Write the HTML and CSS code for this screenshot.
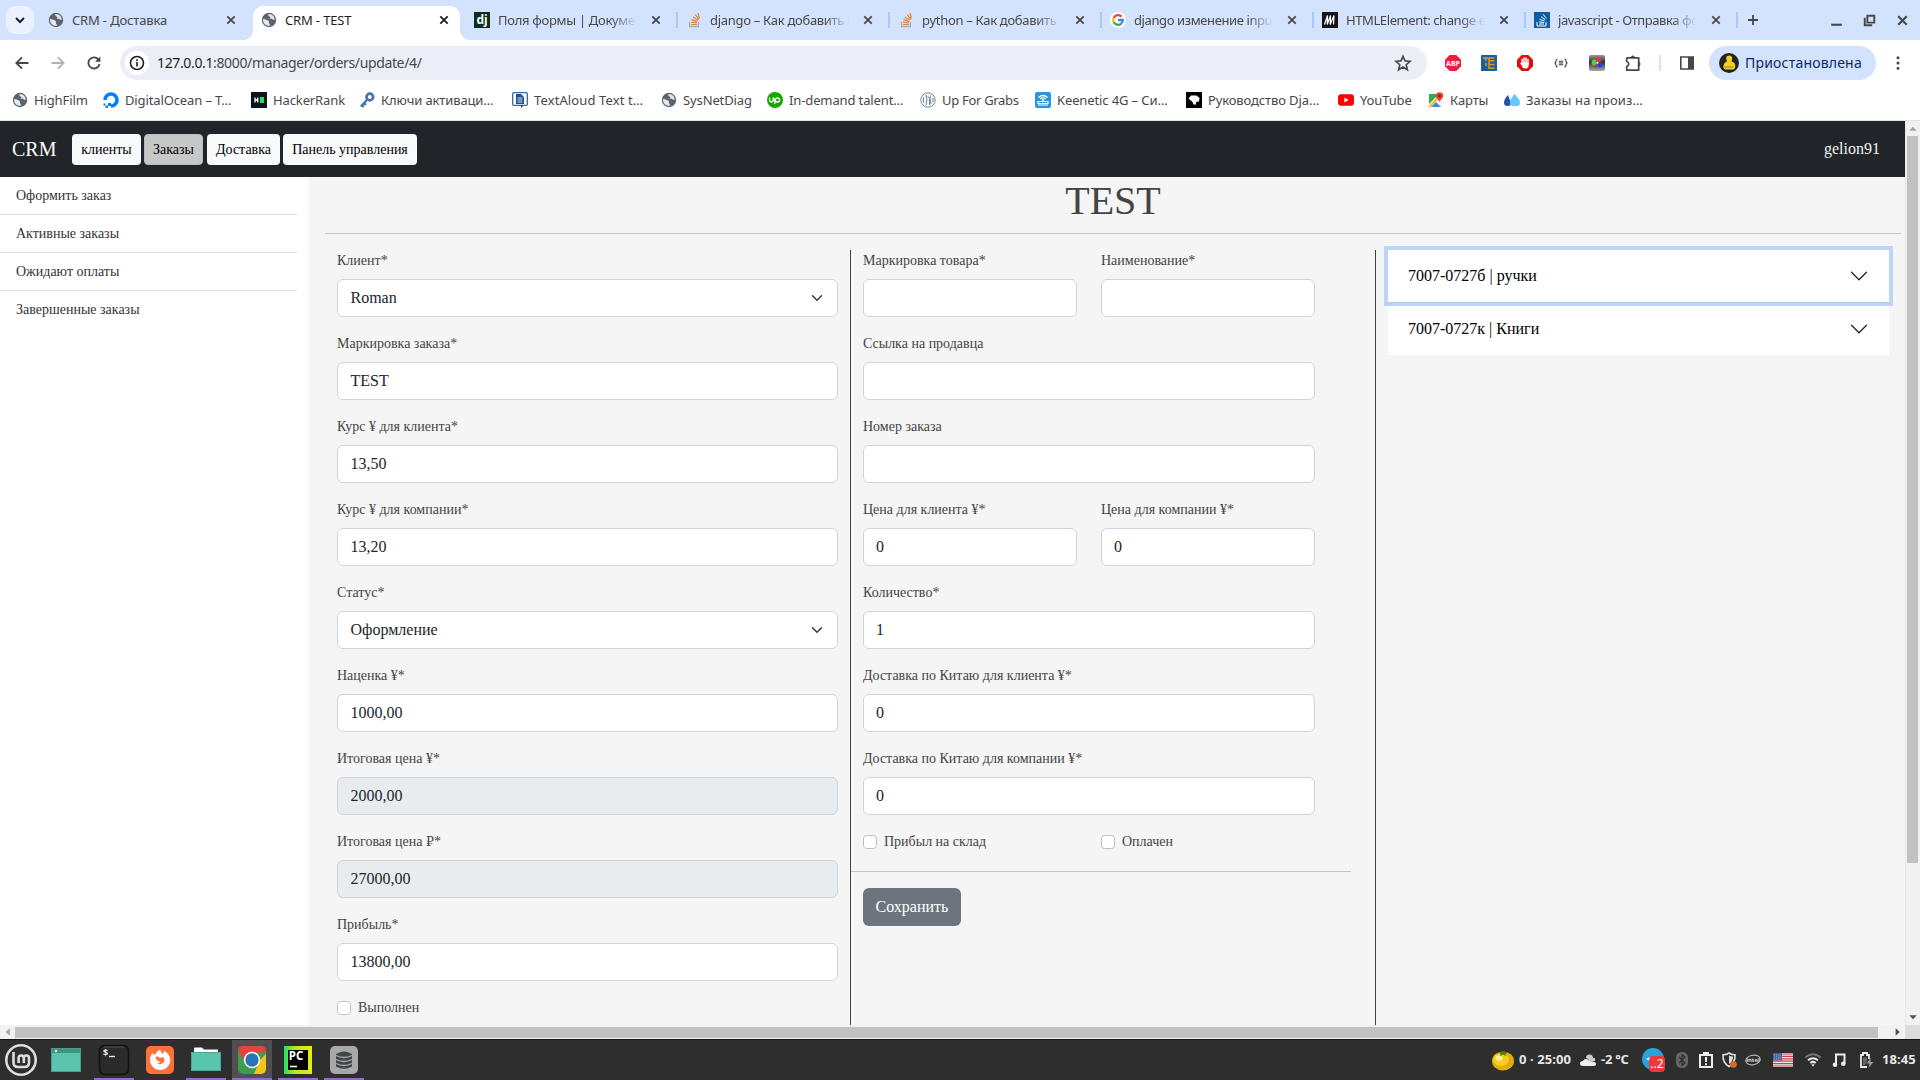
FILE: index.html
```html
<!DOCTYPE html>
<html lang="ru">
<head>
<meta charset="utf-8">
<title>CRM - TEST</title>
<link rel="stylesheet" href="styles.css">
</head>
<body>
<svg class="defs" width="0" height="0">
  <symbol id="globe" viewBox="0 0 16 16"><circle cx="8" cy="8" r="7.2" fill="#5f6368"/><path d="M2 7c2 .2 3.500 1 5 1.400C8.300 8.800 7.800 10 8 11c.2 1.200 1.200 1 1.300 2.600l-1.500.2C4.500 13.700 2 11 2 8zM6.500 2.200C8 3 6.800 3.900 8.500 4.400c1.500.4 1 1.500 0 2 1.300.8 2.600-.2 3.200.9.700 1 1.700.6 2 .2 0-2.500-1.700-4.800-4-5.300z" fill="#dfe8f8"/></symbol>
  <symbol id="close" viewBox="0 0 16 16"><path d="M4.300 4.300l7.400 7.400M11.700 4.300l-7.400 7.400" stroke="currentColor" stroke-width="1.800" fill="none"/></symbol>
  <symbol id="stack" viewBox="0 0 16 16"><path d="M3.500 10v4.500h9V10" fill="none" stroke="#a9adb0" stroke-width="1.300"/><path d="M5 12.500h6M5 10.200l6 .8M5.600 7.600l5.600 2M7 4.900l4.900 3.400M9.300 2.500l3.400 4.800M12 1l1.400 5.500" stroke="#ef7f2c" stroke-width="1.200"/></symbol>
  <symbol id="chev" viewBox="0 0 16 16"><path d="M2 5l6 6 6-6" fill="none" stroke="currentColor" stroke-width="var(--w,1)" stroke-linecap="round" stroke-linejoin="round"/></symbol>
</svg>

<header class="tabstrip">
  <button class="tab-search"><svg width="16" height="16" viewBox="0 0 16 16"><path d="M4 6l4 4 4-4" fill="none" stroke="#1f1f1f" stroke-width="2"/></svg></button>
  <div class="tab first"><svg class="fav"><use href="#globe"/></svg><span>CRM - Доставка</span><svg class="x"><use href="#close"/></svg></div>
  <div class="tab active"><svg class="fav"><use href="#globe"/></svg><span>CRM - TEST</span><svg class="x"><use href="#close"/></svg></div>
  <div class="tab"><i class="fav dj">dj</i><span class="fade">Поля формы | Докумен</span><svg class="x"><use href="#close"/></svg></div>
  <div class="tab sep"><svg class="fav"><use href="#stack"/></svg><span class="fade">django – Как добавить l</span><svg class="x"><use href="#close"/></svg></div>
  <div class="tab sep"><svg class="fav"><use href="#stack"/></svg><span class="fade">python – Как добавить</span><svg class="x"><use href="#close"/></svg></div>
  <div class="tab sep"><svg class="fav" viewBox="0 0 16 16"><circle cx="8" cy="8" r="8" fill="#fff"/><g fill="none" stroke-width="2.300"><path d="M11.500 4.600A4.800 4.800 0 0 0 3.800 5.700" stroke="#ea4335"/><path d="M3.800 5.700a4.800 4.800 0 0 0 0 4.600" stroke="#fbbc05"/><path d="M3.800 10.300a4.800 4.800 0 0 0 7.400 1.300" stroke="#34a853"/><path d="M11.200 11.600A4.800 4.800 0 0 0 12.800 8H8" stroke="#4285f4"/></g></svg><span class="fade tight">django изменение inpu</span><svg class="x"><use href="#close"/></svg></div>
  <div class="tab sep"><svg class="fav" viewBox="0 0 16 16"><rect width="16" height="16" fill="#15141a"/><path d="M2.500 12.500l3-9-.3 9 3.300-9-.3 9 3.800-9-.5 9" fill="none" stroke="#fff" stroke-width="1.200"/></svg><span class="fade tight">HTMLElement: change e</span><svg class="x"><use href="#close"/></svg></div>
  <div class="tab sep"><svg class="fav" viewBox="0 0 16 16"><rect width="16" height="16" fill="#0a5ca5"/><path d="M3 10v4h9v-4M5 12h5M5 9.800l5 .7M5.600 7.200l5 1.900M7 4.700l4.300 3M9.200 2.300l3 4" fill="none" stroke="#fff"/></svg><span class="fade tight">javascript - Отправка фо</span><svg class="x"><use href="#close"/></svg></div>
  <div class="plus sep"><svg width="16" height="16" viewBox="0 0 16 16"><path d="M8 3v10M3 8h10" stroke="#444746" stroke-width="1.800"/></svg></div>
  <div class="winctl">
    <svg viewBox="0 0 16 16"><path d="M3 12h10" stroke="#474747" stroke-width="2"/></svg>
    <svg viewBox="0 0 16 16"><path d="M6 3.500h6.500V10H6zM3.500 5.500v7h7" fill="none" stroke="#474747" stroke-width="1.800"/></svg>
    <svg viewBox="0 0 16 16"><path d="M4 4l8 8M12 4l-8 8" stroke="#474747" stroke-width="2"/></svg>
  </div>
</header>

<section class="toolbar">
  <div class="navs">
    <svg viewBox="0 0 16 16"><path d="M14.500 8H2.500M8 2.300L2.300 8 8 13.700" fill="none" stroke="#444746" stroke-width="1.800"/></svg>
    <svg viewBox="0 0 16 16"><path d="M1.500 8h12M8 2.300L13.700 8 8 13.700" fill="none" stroke="#b0b2b4" stroke-width="1.800"/></svg>
    <svg viewBox="0 0 16 16"><path d="M13.500 9A5.600 5.600 0 1 1 12.300 4.300L13.500 5.500" fill="none" stroke="#444746" stroke-width="1.800"/><path d="M14.300 1.500v5.300H9z" fill="#444746"/></svg>
  </div>
  <div class="omnibox">
    <span class="info"><svg width="16" height="16" viewBox="0 0 16 16"><circle cx="8" cy="8" r="6.500" fill="none" stroke="#1f1f1f" stroke-width="1.600"/><path d="M8 7v4.500M8 4.200v1.700" stroke="#1f1f1f" stroke-width="1.600"/></svg></span>
    <span class="url"><b>127.0.0.1</b>:8000/manager/orders/update/4/</span>
    <svg width="18" height="18" viewBox="0 0 18 18"><path d="M9 2.200l2 4.700 5.100.4-3.900 3.400 1.200 5L9 13l-4.400 2.700 1.200-5L1.900 7.300 7 6.900z" fill="none" stroke="#474747" stroke-width="1.600"/></svg>
  </div>
  <div class="exts">
    <svg viewBox="0 0 16 16"><path d="M4.700 0h6.600L16 4.700v6.600L11.300 16H4.700L0 11.300V4.700z" fill="#ee1c3e"/><text x="8" y="10.700" text-anchor="middle" font-size="7" font-weight="bold" fill="#fff">ABP</text></svg>
    <svg viewBox="0 0 16 16"><rect width="16" height="16" rx=".5" fill="#1c5f9f"/><path d="M2 3h11.500M5 3v3M5 8v3M8 3v11M8 5.800h5.500M8 9.500h5.500M8 13.300h5.500" fill="none" stroke="#e0952f" stroke-width="1.500"/></svg>
    <svg viewBox="0 0 16 16"><path d="M4.700 0h6.600L16 4.700v6.600L11.300 16H4.700L0 11.300V4.700z" fill="#e40d0d"/><path d="M5 4.500V9M7 3v5M9 3v5M11 4.500V9M4 8.500l2 2" fill="none" stroke="#fff" stroke-width="1.500" stroke-linecap="round"/><path d="M4.300 7.500h7.400V10q0 3.500-3.200 3.500T5 11z" fill="#fff"/></svg>
    <svg viewBox="0 0 16 16"><path d="M4.500 4q-1.500 0-1.500 2T1.500 8Q3 8 3 10t1.500 2M11.500 4Q13 4 13 6t1.500 2Q13 8 13 10t-1.500 2M5.800 6.200h4.400M5.800 8h4.400M5.800 9.800h4.400" fill="none" stroke="#333" stroke-width="1.100"/></svg>
    <svg viewBox="0 0 16 16"><defs><linearGradient id="cg" x2="0" y2="1"><stop stop-color="#999"/><stop offset=".45" stop-color="#333"/><stop offset="1" stop-color="#aaa"/></linearGradient></defs><rect width="16" height="16" rx="2" fill="url(#cg)"/><circle cx="5.500" cy="7.500" r="3" fill="#4fd048"/><circle cx="9.500" cy="5" r="2.600" fill="#ee3038"/><circle cx="10.800" cy="9.700" r="2.700" fill="#2543e6"/><circle cx="7" cy="11" r="1.700" fill="#b9344a"/><circle cx="8.500" cy="7.700" r="1" fill="#fff"/></svg>
    <svg viewBox="0 0 16 16"><path d="M1.700 2.800h12v3.700M13.700 9.500v5.700h-12v-3.700q2-.5 2-2.500t-2-2.500V2.800" fill="none" stroke="#474747" stroke-width="1.700" stroke-linejoin="round"/><path d="M5.800 2.500a2 2 0 0 1 4 0zM13.500 7a2 2 0 0 1 0 4z" fill="#474747"/><path d="M13.700 6v5" stroke="#474747" stroke-width="1.700"/></svg>
  </div>
  <i class="divider"></i>
  <svg class="panel" viewBox="0 0 16 16"><path d="M1.800 2h12.400v12H1.800z" fill="none" stroke="#474747" stroke-width="1.600"/><path d="M9 2h5v12H9z" fill="#474747"/></svg>
  <div class="profile"><svg width="20" height="20" viewBox="0 0 20 20"><circle cx="10" cy="10" r="10" fill="#24231f"/><path d="M7.200 5.800q0-3.200 3-3.200t3 3.200l-.7 2.400 3 1.800q2 4.500-1 6.500H6q-3.200-2.500-.4-6.500l2.300-1.800z" fill="#f2cf28"/><path d="M5.500 14h9" stroke="#a87b0c"/></svg><span>Приостановлена</span></div>
  <svg class="dots" viewBox="0 0 16 16"><path d="M8 2.800h.01M8 8h.01M8 13.200h.01" stroke="#474747" stroke-width="3" stroke-linecap="round"/></svg>
</section>

<nav class="bookmarks">
  <a><svg><use href="#globe"/></svg><span>HighFilm</span></a>
  <a><svg viewBox="0 0 16 16"><path d="M2 8a6 6 0 1 1 6 6" fill="none" stroke="#0080ff" stroke-width="3.600"/><path d="M5 11h3v3H5zM2.500 13.500H5V16H2.500zM.5 11.500h2v2h-2z" fill="#0080ff"/></svg><span>DigitalOcean – T…</span></a>
  <a><svg viewBox="0 0 16 16"><rect width="16" height="16" fill="#0e141e"/><path d="M4 5.500v5M6.800 5.500v5M4 8h3" stroke="#fff" stroke-width="1.300"/><rect x="9" y="5" width="4" height="6" fill="#1fdf64"/></svg><span>HackerRank</span></a>
  <a><svg viewBox="0 0 16 16"><circle cx="10.800" cy="5" r="3.300" fill="none" stroke="#4a72ab" stroke-width="2.800"/><path d="M8.300 7.500l-6.500 7M3 13l2 1.800M5 11l2 1.800" stroke="#4a72ab" stroke-width="2.300"/></svg><span>Ключи активаци…</span></a>
  <a class="loose"><svg viewBox="0 0 16 16"><rect x=".7" y=".7" width="14.600" height="12.600" rx="1" fill="#fff" stroke="#3f659e" stroke-width="1.300"/><path d="M4 2h5l3 3v7H4z" fill="#234e93"/><path d="M5.500 6h5M5.500 8h5M5.500 10h5" stroke="#fff" stroke-width=".8"/><path d="M9 13v3l3-3" fill="#234e93"/></svg><span>TextAloud Text t…</span></a>
  <a><svg><use href="#globe"/></svg><span>SysNetDiag</span></a>
  <a><svg viewBox="0 0 16 16"><circle cx="8" cy="8" r="8" fill="#14a800"/><path d="M2.600 5.500v2.700q0 1.800 1.800 1.800t1.800-1.800V5.500q1.400 4.500 4.200 4.500 2.200 0 2.200-2t-2.100-2-2.300 2.200L7.600 12" fill="none" stroke="#fff" stroke-width="1.300"/></svg><span>In-demand talent…</span></a>
  <a><svg viewBox="0 0 16 16"><circle cx="8" cy="8" r="7.200" fill="#f2f5f7" stroke="#7b8a96"/><path d="M3.500 5.500v5M6 3l1 4-1 6M8 4.500l1.500 2V13M10.500 3.500l-.5 3 1 5.500M13 6v4" stroke="#778792" fill="none"/></svg><span>Up For Grabs</span></a>
  <a><svg viewBox="0 0 16 16"><rect width="16" height="16" rx="2" fill="#2b95d9"/><path d="M3.500 5.500q4.500-4 9 0M5.300 7q2.700-2.200 5.400 0M3 9.500h10v2H3zM3 13h10" fill="none" stroke="#fff" stroke-width="1.200"/><circle cx="8" cy="8" r="1" fill="#fff"/></svg><span>Keenetic 4G – Си…</span></a>
  <a><svg viewBox="0 0 16 16"><rect width="16" height="16"/><path d="M2.500 6.500L5 3.500h5.500l3 2.500-.5 3.500-3 .5v2.500H7.500L6.500 10z" fill="#fff"/></svg><span>Руководство Dja…</span></a>
  <a><svg viewBox="0 0 16 16"><rect y="2.300" width="16" height="11.400" rx="3" fill="#f00"/><path d="M6.400 5.500v5l4.200-2.500z" fill="#fff"/></svg><span>YouTube</span></a>
  <a><svg viewBox="0 0 16 16"><path d="M1 2h13v13H1z" fill="#34a853"/><path d="M1 12L11 2h3v13H1z" fill="#f1f3f4"/><path d="M3 15l5-5 5 5z" fill="#4285f4"/><path d="M1 15l12-12" stroke="#fbbc04" stroke-width="1.800"/><path d="M11.500.2a3.700 3.700 0 0 0-3.700 3.700c0 2.500 2.700 3.300 3.700 6.100 1-2.800 3.700-3.600 3.700-6.100A3.700 3.700 0 0 0 11.500.2z" fill="#ea4335"/><circle cx="11.500" cy="3.900" r="1.300" fill="#811"/></svg><span>Карты</span></a>
  <a class="loose"><svg viewBox="0 0 16 16"><path d="M4 3Q0 7 0 10.500T3.600 14 7 11z" fill="#2850b0"/><path d="M10.500 2Q6 7 6 11q0 3 3 3h4q3 0 3-3 0-4-5.500-9z" fill="#63c9fb"/></svg><span>Заказы на произ…</span></a>
</nav>

<div class="viewport">
  <div class="page">
    <header class="navbar">
      <span class="brand">CRM</span>
      <button>клиенты</button><button class="on">Заказы</button><button>Доставка</button><button>Панель управления</button>
      <span class="user">gelion91</span>
    </header>
    <div class="body">
      <aside class="side">
        <a>Оформить заказ</a><a>Активные заказы</a><a>Ожидают оплаты</a><a>Завершенные заказы</a>
      </aside>
      <main class="content">
        <h1>TEST</h1>
        <div class="cols">
          <form class="col order">
            <label>Клиент*</label><div class="field select">Roman<svg width="12" height="12"><use href="#chev"/></svg></div>
            <label>Маркировка заказа*</label><div class="field">TEST</div>
            <label>Курс ¥ для клиента*</label><div class="field">13,50</div>
            <label>Курс ¥ для компании*</label><div class="field">13,20</div>
            <label>Статус*</label><div class="field select">Оформление<svg width="12" height="12"><use href="#chev"/></svg></div>
            <label>Наценка ¥*</label><div class="field">1000,00</div>
            <label>Итоговая цена ¥*</label><div class="field ro">2000,00</div>
            <label>Итоговая цена <span class="rub">₽</span>*</label><div class="field ro">27000,00</div>
            <label>Прибыль*</label><div class="field">13800,00</div>
            <div class="check"><i></i>Выполнен</div>
          </form>
          <form class="col item">
            <div class="grid">
              <div><label>Маркировка товара*</label><div class="field"></div></div>
              <div><label>Наименование*</label><div class="field"></div></div>
              <div class="wide"><label>Ссылка на продавца</label><div class="field"></div></div>
              <div class="wide"><label>Номер заказа</label><div class="field"></div></div>
              <div><label>Цена для клиента ¥*</label><div class="field">0</div></div>
              <div><label>Цена для компании ¥*</label><div class="field">0</div></div>
              <div class="wide"><label>Количество*</label><div class="field">1</div></div>
              <div class="wide"><label>Доставка по Китаю для клиента ¥*</label><div class="field">0</div></div>
              <div class="wide"><label>Доставка по Китаю для компании ¥*</label><div class="field">0</div></div>
              <div class="check"><i></i>Прибыл на склад</div>
              <div class="check"><i></i>Оплачен</div>
            </div>
            <hr>
            <button type="button" class="save">Сохранить</button>
          </form>
          <section class="col goods">
            <div class="acc focus">7007-0727б | ручки<svg width="20" height="20"><use href="#chev"/></svg></div>
            <div class="acc">7007-0727к | Книги<svg width="20" height="20"><use href="#chev"/></svg></div>
          </section>
        </div>
      </main>
    </div>
  </div>
  <div class="vbar"><svg viewBox="0 0 15 15"><path d="M3.500 10h8l-4-4.500z" fill="#a3a3a3"/></svg><i></i><svg viewBox="0 0 15 15"><path d="M3.500 5h8l-4 4.500z" fill="#505050"/></svg></div>
  <div class="hbar"><svg viewBox="0 0 15 15"><path d="M10 3.500v8L5.500 7.500z" fill="#a3a3a3"/></svg><i></i><svg viewBox="0 0 15 15"><path d="M5.500 3.500v8L10 7.500z" fill="#505050"/></svg></div>
  <div class="corner"></div>
</div>

<footer class="taskbar">
  <div class="apps">
    <a class="mint"><svg viewBox="0 0 32 32"><circle cx="16" cy="16" r="14.700" fill="none" stroke="#dedede" stroke-width="2.600"/><path d="M8.500 8v10.500q0 4.500 4.500 4.500h6.500q4.500 0 4.500-4.500V14q0-2.500-2.600-2.500T18.800 14v5M18.800 14q0-2.500-2.600-2.500T13.600 14v5" fill="none" stroke="#dedede" stroke-width="2.600"/></svg></a>
    <a class="win"><svg viewBox="0 0 32 32"><path d="M1 4h30v24H1z" fill="#5ac4ad"/><path d="M1 4h30v5H1z" fill="#43917f"/><path d="M1.500 4.500h29v23h-29z" fill="none" stroke="#46a08c"/><path d="M5 6h2v2H5z" fill="#fff"/></svg></a>
    <a class="run"><svg viewBox="0 0 32 32"><rect x="1.500" y="1.500" width="29" height="29" rx="5" fill="#2a2a2a" stroke="#111" stroke-width="1.600"/><path d="M6 3h20" stroke="#555"/><text x="5" y="12" font-size="9" font-weight="bold" fill="#eee">$</text><path d="M11 12.500h6" stroke="#eee" stroke-width="1.400"/></svg></a>
    <a><svg viewBox="0 0 32 32"><rect x="2" y="2" width="28" height="28" rx="5" fill="#ff7139"/><path d="M8.500 9q1 1.500 3 1.500Q13 6.500 16.500 5.500q-.5 3 2.500 4.500 1.200-1.500.5-3.500 7 4 6.800 10A10.200 10.200 0 1 1 8.500 9z" fill="#fff"/><path d="M11.500 13q2-1.200 4.500 1l3-1q2.500 3 .5 5.500-3 3-6.500.5 3 .2 3.500-1.500-3.500.5-5-4.500z" fill="#ff7139"/></svg></a>
    <a class="run"><svg viewBox="0 0 32 32"><path d="M4 4.500q0-1 1-1h7l2 2h14v5H4z" fill="#fff"/><path d="M1 8h30v19H1z" fill="#5ac4ad"/><path d="M1.500 8.500h29v18h-29z" fill="none" stroke="#49a793"/></svg></a>
    <a class="run cur"><svg viewBox="0 0 32 32"><defs><clipPath id="cr"><rect x="2" y="2" width="28" height="28" rx="5"/></clipPath></defs><g clip-path="url(#cr)"><path d="M0 0h32v32H0z" fill="#3e9d4e"/><path d="M32 8v24H17l7-16z" fill="#f6c416"/><path d="M0 0h32v8.500H16L9 18 1 5z" fill="#e5443c"/></g><circle cx="16" cy="16" r="8.200" fill="#fff"/><circle cx="16" cy="16" r="6.700" fill="#2f72b5"/></svg></a>
    <a class="run"><svg viewBox="0 0 32 32"><defs><linearGradient id="pc"><stop stop-color="#1fe06c"/><stop offset=".4" stop-color="#b9ea1d"/><stop offset="1" stop-color="#e6ee12"/></linearGradient></defs><rect x="2" y="2" width="28" height="28" fill="url(#pc)"/><path d="M6 6h20v20H6z"/><text x="6.800" y="15.500" font-size="11.500" font-weight="bold" fill="#fff">PC</text><path d="M8 22.500h7" stroke="#fff" stroke-width="1.600"/></svg></a>
    <a class="run"><svg viewBox="0 0 32 32"><rect x="2" y="2" width="28" height="28" rx="5" fill="#a9a9a9"/><path d="M8 10q8-5 16 0v12.500q-8 4.500-16 0z" fill="#3e4749"/><path d="M8 11.500q8 4 16 0M8 15.500q8 4 16 0M8 19.500q8 4 16 0" fill="none" stroke="#a9a9a9" stroke-width="1.300"/></svg></a>
  </div>
  <div class="tray">
    <svg viewBox="0 0 22 22"><ellipse cx="11" cy="12" rx="11" ry="9.500" fill="#e2ad0a"/><ellipse cx="9" cy="10.500" rx="8" ry="6.500" fill="#f3cf22"/><ellipse cx="7" cy="9" rx="3.500" ry="2.800" fill="#fcf08a"/><path d="M11 2.500L6 3.500l3 1.500-1.500 2.500 3.500-2 3.500 2L13 5l4-1.500z" fill="#4e7a18"/></svg>
    <b>0 · 25:00</b>
    <svg viewBox="0 0 16 16"><path d="M6 6q0-3.500 3.500-3.500T13 6h2v3H9Q8.500 6.500 6 6z" fill="#ccc"/><path d="M3 14q-3 0-3-2.500T3 9q.7-2 3-2t3 2q3 0 4 .5 3 .5 3 2.500t-3 2z" fill="#eee"/></svg>
    <b class="temp">-2 °C</b>
    <span class="tg"><svg viewBox="0 0 22 22"><circle cx="11" cy="11" r="11" fill="#2aa1dd"/><path d="M4 11l4-2v4z" fill="#fff"/></svg><em>..2</em></span>
    <svg class="w12" viewBox="0 0 12 16"><rect width="12" height="16" rx="5.500" fill="#666"/><path d="M3 5l6 6-3 2.500v-11L9 5l-6 6" fill="none" stroke="#2e2e2e" stroke-width="1.200"/></svg>
    <svg viewBox="0 0 16 16"><path d="M2 3h12v12H2zM6 3V1h4v2M8 5v5M8 11.300v2" fill="none" stroke="#eee" stroke-width="2"/></svg>
    <svg viewBox="0 0 16 16"><path d="M8 1q3 2 6 1.800Q14.500 11 8 14.500 1.500 11 2 2.800 5 3 8 1z" fill="none" stroke="#ddd" stroke-width="1.600"/><path d="M8 3.500q2 1 4 1Q12 10 8 12z" fill="#ddd"/><circle cx="12.500" cy="12.500" r="3.300" fill="#e0652b"/></svg>
    <svg viewBox="0 0 16 16"><ellipse cx="8" cy="8" rx="7.300" ry="4.800" fill="none" stroke="#bbb" stroke-width="1.100" transform="rotate(-10 8 8)"/><text x="8" y="10" text-anchor="middle" font-size="6" font-weight="bold" fill="#ddd">intel</text></svg>
    <svg class="flag" viewBox="0 0 20 14"><path d="M0 0h20v14H0z" fill="#eee"/><path d="M0 1h20M0 3.400h20M0 5.800h20M0 8.200h20M0 10.600h20M0 13h20" stroke="#c8414b" stroke-width="1.200"/><path d="M0 0h9v7.500H0z" fill="#49619c"/><path d="M1 2h7M1 4h7M1 6h7" stroke="#aab5d0" stroke-width=".8" stroke-dasharray="1"/></svg>
    <svg viewBox="0 0 16 16"><path d="M.5 5.500q7.500-6.500 15 0" fill="none" stroke="#777" stroke-width="2"/><path d="M3 8.300q5-4 10 0M5.400 11q2.600-2.200 5.200 0" fill="none" stroke="#eee" stroke-width="2"/><path d="M6.300 12.300h3.400L8 14.700z" fill="#eee"/></svg>
    <svg viewBox="0 0 16 16"><path d="M5 12.500V2.500h8.500v9" fill="none" stroke="#eee" stroke-width="2"/><circle cx="4" cy="12.700" r="2.300" fill="#eee"/><circle cx="12.300" cy="11.700" r="2.300" fill="#eee"/></svg>
    <svg viewBox="0 0 16 16"><path d="M9 15H3V3h2V1h4v2h2v4" fill="none" stroke="#eee" stroke-width="1.800"/><path d="M5 5.500h4V9l-2 4H5z" fill="#666"/><path d="M12.500 6l-4 5.500h3L10.500 16l5-6h-3z" fill="#999"/></svg>
    <b>18:45</b>
  </div>
</footer>
</body>
</html>
```
FILE: styles.css
```css
* { box-sizing: border-box; }
body { margin: 0; width: 1920px; height: 1080px; overflow: hidden; display: flex; flex-direction: column; background: #fff; font-family: "Noto Sans", sans-serif; }
svg { flex: none; display: block; }
.defs { position: absolute; }
button { border: 0; font-family: inherit; }

/* browser tabs */
.tabstrip { height: 40px; flex: none; background: #d3e2fd; display: flex; align-items: center; padding-left: 6px; }
.tab-search { width: 28px; height: 28px; border-radius: 9px; background: #ebf1fe; padding: 6px; margin-right: 6px; }
.tab { width: 212px; height: 40px; flex: none; display: flex; align-items: center; padding: 0 12px 0 10px; color: #474747; font-size: 13px; letter-spacing: -.15px; }
.tab.first { padding: 0 13px 0 8px; }
.fav { width: 16px; height: 16px; margin-right: 8px; flex: none; }
.tab span { flex: 1; white-space: nowrap; margin-right: 8px; line-height: 20px; min-width: 0; }
.tab .fade { letter-spacing: -.3px; -webkit-mask-image: linear-gradient(90deg, #000 80%, transparent 98%); mask-image: linear-gradient(90deg, #000 80%, transparent 98%); }
.tab .tight { letter-spacing: -.4px; }
.tab .x { width: 16px; height: 16px; }
.tab.active { position: relative; width: 207px; margin: 0 4px 0 1px; height: 34px; align-self: flex-end; background: #fff; border-radius: 10px 10px 0 0; color: #1f1f1f; padding: 0 8px 6px; }
.tab.active::before, .tab.active::after { content: ""; position: absolute; bottom: 0; width: 10px; height: 10px; }
.tab.active::before { left: -10px; background: radial-gradient(circle at 0 0, transparent 9.500px, #fff 10.500px); }
.tab.active::after { right: -10px; background: radial-gradient(circle at 100% 0, transparent 9.500px, #fff 10.500px); }
.dj { background: #092e20; color: #fff; font: bold 12px/15px "Noto Sans", sans-serif; text-align: center; }
.sep { background: linear-gradient(#a8c7fa, #a8c7fa) 0 50% / 2px 16px no-repeat; }
.plus { width: 32px; height: 40px; padding: 12px 0 0 9px; }
.winctl { display: flex; gap: 16px; margin: 0 9px 0 auto; }
.winctl svg { width: 17px; height: 17px; }

/* address row */
.toolbar { height: 46px; flex: none; display: flex; align-items: center; background: linear-gradient(#d3e2fd, #d3e2fd) 0 0 / 100% 10px no-repeat; }
.toolbar { background: #fff; }
.navs { display: flex; gap: 20px; width: 120px; padding-left: 14px; }
.navs svg { width: 16px; height: 16px; }
.omnibox { width: 1307px; height: 34px; border-radius: 17px; background: #ebeef7; display: flex; align-items: center; padding: 0 15px 0 5px; }
.info { width: 24px; height: 24px; border-radius: 50%; background: #fff; padding: 4px; margin-right: 8px; }
.url { flex: 1; font-size: 14px; color: #474747; letter-spacing: -.36px; padding-bottom: 1px; }
.url b { font-weight: 400; color: #1f1f1f; }
.exts { display: flex; gap: 20px; margin-left: 18px; }
.exts svg { width: 16px; height: 16px; font-family: "Noto Sans", sans-serif; }
.divider { width: 2px; height: 16px; background: #d3e3fd; margin: 0 18px 0 18px; }
.panel { width: 16px; height: 16px; margin-right: 14px; }
.profile { width: 167px; height: 34px; border-radius: 17px; background: #d3e3fd; display: flex; align-items: center; gap: 6px; padding: 0 0 1px 10px; color: #0a2a66; font-size: 14px; letter-spacing: .2px; }
.dots { width: 16px; height: 16px; margin-left: 14px; }

.bookmarks { height: 35px; flex: none; display: grid; grid-template-columns: 91px 148px 108px 153px 149px 106px 153px 115px 151px 152px 90px 76px auto; padding: 5px 0 0 12px; border-bottom: 1px solid #e3e1dc; font-size: 13px; color: #474747; letter-spacing: -.12px; }
.bookmarks a { display: flex; gap: 6px; height: 20px; line-height: 20px; align-items: center; margin-top: -1px; white-space: nowrap; }
.bookmarks svg { width: 16px; height: 16px; }
.bookmarks .loose { letter-spacing: .12px; }
.bookmarks a:nth-child(8) { letter-spacing: -.3px; }

/* scrolled page area */
.viewport { height: 918px; flex: none; display: grid; grid-template: 904px 14px / 1905px 15px; font-family: "Liberation Serif", serif; }
.page { overflow: hidden; display: flex; flex-direction: column; }
.navbar { height: 56px; flex: none; background: #212529; display: flex; align-items: center; padding: 0 25px 0 12px; color: #fff; }
.brand { font-size: 20px; width: 60px; }
.navbar button { height: 31px; padding: 1px 0 0; margin: 1px 3px 0 0; border-radius: 4px; background: #f8f9fa; color: #000; font-size: 14px; width: 69px; }
.navbar button:nth-of-type(2) { width: 59px; margin-right: 4px; padding: 0; }
.navbar button:nth-of-type(3) { width: 73px; }
.navbar button:nth-of-type(4) { width: 134px; }
.navbar .on { background: #c6c7c8; border: 1px solid #babbbc; }
.user { margin-left: auto; color: #f1f1f1; font-size: 16px; }
.body { flex: 1; display: flex; }
.side { width: 309px; padding-right: 12px; background: #fff; }
.side a { display: block; height: 38px; line-height: 38px; padding-left: 16px; font-size: 14px; color: #333; border-bottom: 1px solid #dedfe0; }
.side a:last-child { border: 0; }
.content { flex: 1; background: #f5f5f5; padding: 0 4px 0 16px; color: #444; }
h1 { margin: 0; height: 57px; border-bottom: 1px solid #c8c8c8; font-weight: 400; font-size: 40px; line-height: 48px; text-align: center; }
.cols { display: flex; margin-top: 16px; height: 775px; }
.col { width: 525px; flex: none; padding: 0 12px; }
.order { width: 526px; border-right: 1px solid #444; }
.item { border-right: 1px solid #444; }
label { display: block; height: 29px; line-height: 21px; font-size: 14px; }
.rub { font-family: "DejaVu Serif", serif; font-size: 12.500px; line-height: 1; }
.field { height: 38px; border: 1px solid #ced4da; border-radius: 6px; background: #fff; color: #212529; font-size: 16px; line-height: 36px; padding: 0 12px; margin-bottom: 16px; }
.order .field { padding-left: 12.500px; }
.select { display: flex; justify-content: space-between; align-items: center; --w: 2; }
.order .select { padding-right: 14px; }
.select svg { color: #343a40; }
.ro { background: #e9ecef; }
.check { display: flex; align-items: flex-start; font-size: 14px; line-height: 21px; }
.check i { width: 14px; height: 14px; border: 1px solid #bfbfbf; border-radius: 3.500px; background: #fff; margin: 4px 7px 0 0; }
.grid { display: grid; grid-template-columns: 214px 214px; column-gap: 24px; }
.wide { grid-column: 1 / 3; }
.item hr { margin: 19px 0 16px -12px; width: 500px; border: 0; border-top: 1px solid #c5c5c5; }
.save { width: 98px; height: 38px; border-radius: 6px; background: #6c757d; color: #fff; font-size: 16px; padding: 0; }
.acc { height: 52px; display: flex; justify-content: space-between; align-items: center; padding: 0 20px; background: #fff; color: #000; font-size: 16px; }
.acc svg { color: #212529; }
.acc.focus { height: 53px; border-bottom: 1px solid #a9c8ee; box-shadow: 0 0 0 4px #bcd4f8; clip-path: inset(-4px -4px -3px); position: relative; }

.vbar { background: #f1f1f1; display: flex; flex-direction: column; border-left: 1px solid #e9e9e9; }
.vbar svg { width: 14px; height: 15px; }
.vbar i { width: 11px; height: 727px; margin: 0 0 auto 1px; background: #c1c1c1; }
.hbar { background: #f1f1f1; display: flex; align-items: center; }
.hbar svg { width: 15px; height: 14px; }
.hbar i { width: 1863px; height: 11px; background: #c1c1c1; margin-right: auto; }
.corner { background: #dcdcdc; }

/* desktop panel */
.taskbar { flex: 1; background: #2e2e2e; border-top: 1px solid #161616; display: flex; justify-content: space-between; color: #e6e6e6; }
.apps { display: flex; }
.apps a { width: 40px; height: 40px; padding: 4px 4px 0; margin-right: 6px; border-bottom: 2px solid transparent; }
.apps .mint { padding-left: 0; margin: 0 1px 0 5px; width: 40px; }
.apps .win { margin-right: 8px; }
.apps svg { width: 32px; height: 32px; }
.apps .run { border-color: #8d6dc9; }
.apps .cur { background: #505050; }
.tray { width: 428px; display: grid; grid-template-columns: 27px 61px 21px 41px 34px 22px 23px 24px 28px 32px 26px 27px 24px auto; align-items: center; font-size: 13px; }
.tray svg { width: 16px; height: 16px; }
.tray > svg:first-child { width: 22px; height: 22px; }
.tray .w12 { width: 12px; }
.tray .flag { width: 20px; height: 14px; }
.tray b { white-space: nowrap; letter-spacing: .1px; padding-bottom: 2px; }
.tray .temp { letter-spacing: -.25px; }
.tg { display: flex; width: 24px; height: 24px; }
.tray .tg svg { width: 22px; height: 22px; }
.tg em { margin: 8px 0 0 -15px; width: 16px; height: 16px; flex: none; background: #f0383a; border-radius: 4px; font: 12px/16px "Noto Sans", sans-serif; text-align: center; color: #fff; }
```
